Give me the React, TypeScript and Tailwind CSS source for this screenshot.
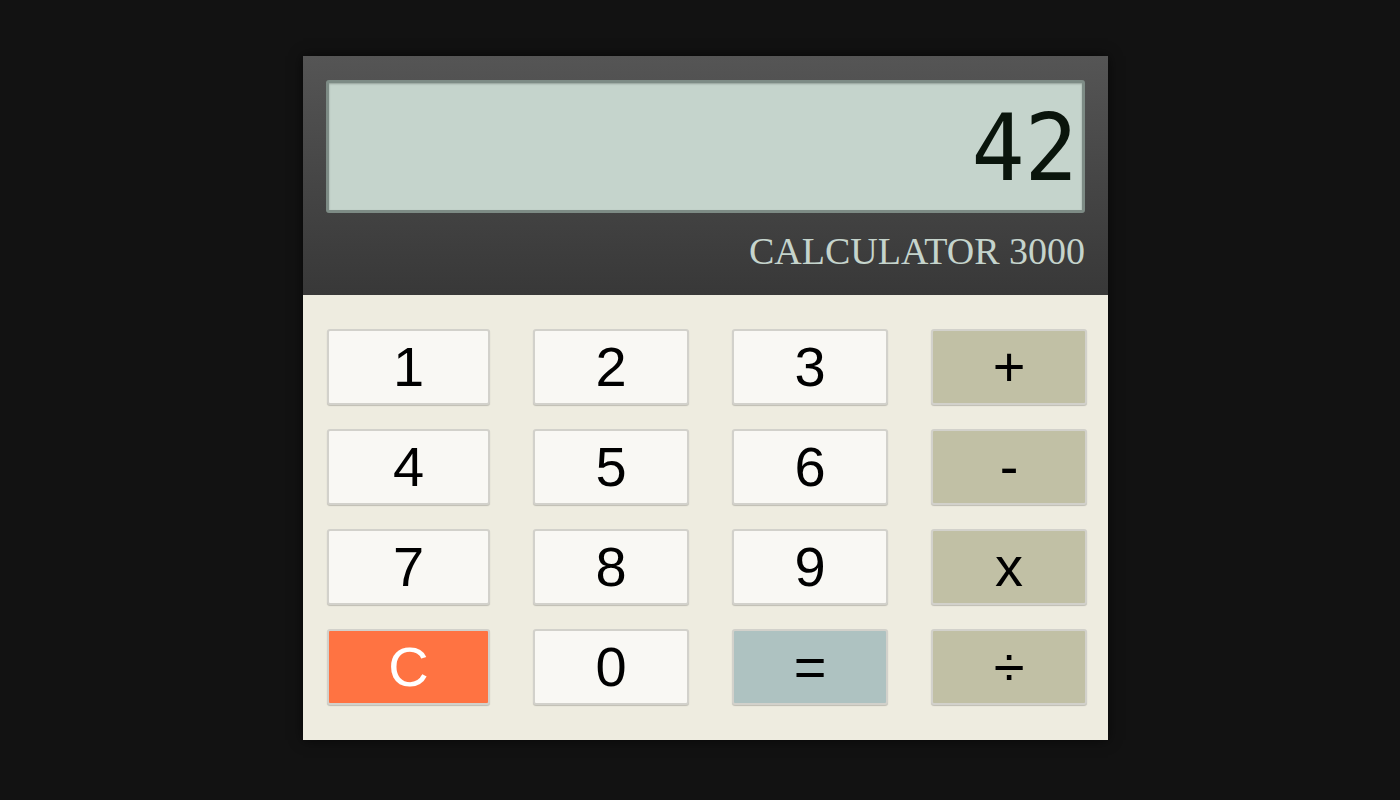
import React from 'react';

type Key = { label: string; kind: 'num' | 'op' | 'clear' | 'eq' };

const keys: Key[] = [
  { label: '1', kind: 'num' },
  { label: '2', kind: 'num' },
  { label: '3', kind: 'num' },
  { label: '+', kind: 'op' },
  { label: '4', kind: 'num' },
  { label: '5', kind: 'num' },
  { label: '6', kind: 'num' },
  { label: '-', kind: 'op' },
  { label: '7', kind: 'num' },
  { label: '8', kind: 'num' },
  { label: '9', kind: 'num' },
  { label: 'x', kind: 'op' },
  { label: 'C', kind: 'clear' },
  { label: '0', kind: 'num' },
  { label: '=', kind: 'eq' },
  { label: '÷', kind: 'op' },
];

const keyColors: Record<Key['kind'], string> = {
  num: 'bg-[#f9f8f4] text-black',
  op: 'bg-[#c1c0a5] text-black',
  clear: 'bg-[#ff7342] text-white',
  eq: 'bg-[#aec2c1] text-black',
};

export default function App() {
  return (
    <div className="min-h-screen bg-[#121212] pl-[303px] pt-[56px]">
      <div className="w-[805px] shadow-[0_0_12px_rgba(0,0,0,0.6)]">
        {/* header with display */}
        <div className="bg-gradient-to-b from-[#555555] to-[#383838] px-[23px] pt-[24px] h-[239px]">
          <div className="flex h-[133px] items-center justify-end overflow-hidden rounded-[3px] border-[3px] border-[#7d8b85] bg-[#c5d4cc] pr-[4px] pt-[4px] shadow-[inset_0_1px_2px_rgba(0,0,0,0.25)]">
            <span className="origin-right scale-x-[0.96] font-['DejaVu_Sans_Mono',monospace] text-[92px] leading-none font-normal text-[#0a150c]">
              42
            </span>
          </div>
          <div className="mt-[16px] text-right font-['Liberation_Serif',serif] text-[38px] leading-[44px] text-[#c5d4cc]">
            CALCULATOR 3000
          </div>
        </div>

        {/* keypad */}
        <div className="bg-[#eeece0] pl-[24px] pr-[20px] pt-[34px] pb-[35px]">
          <div className="grid grid-cols-[163px_156px_156px_156px] gap-y-[24px] gap-x-[43px]">
            {keys.map((k) => (
              <button
                key={k.label}
                className={`flex h-[76px] items-center justify-center rounded-[3px] border-2 border-[#d2d1cb] shadow-[0_1px_1px_rgba(0,0,0,0.2)] font-['Liberation_Sans',Arial,sans-serif] text-[56px] leading-none ${keyColors[k.kind]}`}
              >
                {k.label}
              </button>
            ))}
          </div>
        </div>
      </div>
    </div>
  );
}
